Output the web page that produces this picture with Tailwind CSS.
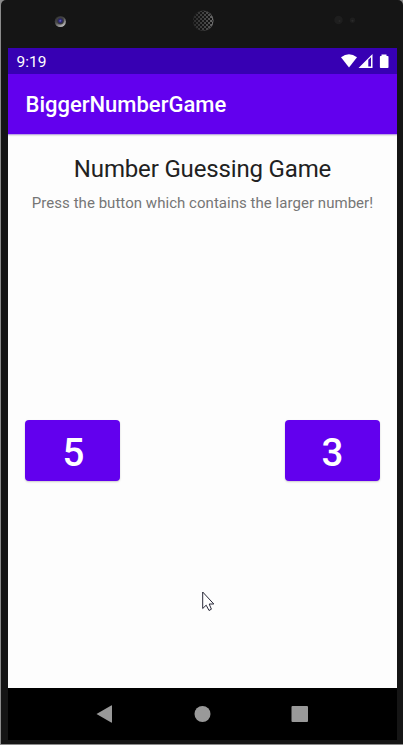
<!DOCTYPE html>
<html lang="en">
<head>
<meta charset="utf-8">
<title>BiggerNumberGame</title>
<script src="https://cdn.jsdelivr.net/npm/@tailwindcss/browser@4"></script>
</head>
<body class="h-[745px] w-[403px] overflow-hidden bg-[#8b8b8b] font-['Roboto',sans-serif]">
<div class="ml-px flex h-[744px] w-[402px] flex-col rounded-t-[5px] bg-[#151515] pl-[7px] pr-[6px]">
  <div class="h-12 shrink-0">
    <svg class="-ml-2 block" width="403" height="48" viewBox="0 0 403 48">
      <defs>
        <radialGradient id="lens"><stop offset="0" stop-color="#7470c0"/><stop offset=".4" stop-color="#29247a"/><stop offset=".75" stop-color="#35353f"/><stop offset="1" stop-color="#444"/></radialGradient>
        <linearGradient id="rim" x2=".6" y2="1"><stop offset="0" stop-color="#222"/><stop offset=".5" stop-color="#4a4a4a"/><stop offset="1" stop-color="#bbb"/></linearGradient>
        <linearGradient id="speaker"><stop offset="0" stop-color="#2a2a2a"/><stop offset=".8" stop-color="#505050"/><stop offset="1" stop-color="#777"/></linearGradient>
        <pattern id="holes" width="4" height="4" patternUnits="userSpaceOnUse"><rect width="2" height="2" fill="#151515"/><rect x="2" y="2" width="2" height="2" fill="#151515"/></pattern>
      </defs>
      <circle cx="60.3" cy="21.5" r="5.6" fill="url(#rim)"/>
      <circle cx="60.3" cy="20.8" r="3.7" fill="url(#lens)"/>
      <circle cx="203.2" cy="20.7" r="10.3" fill="url(#speaker)"/>
      <circle cx="202.8" cy="20.7" r="9.9" fill="url(#holes)"/>
      <circle cx="338.5" cy="20" r="4.3" fill="#1e1e1e"/><circle cx="339.5" cy="21" r="1" fill="#292929"/>
      <circle cx="352.5" cy="20.3" r="2.7" fill="#1e1e1e"/><circle cx="352.5" cy="20.8" r="1" fill="#2b2b2b"/>
    </svg>
  </div>
  <main class="flex h-[640px] w-[389px] shrink-0 flex-col overflow-hidden bg-[#fdfdfd]">
    <div class="relative z-20 flex h-[26px] shrink-0 items-center justify-between bg-[#3700b3] pl-[8.5px] pr-[8px] text-white">
      <span class="pt-[2px] text-[15.5px] leading-6">9:19</span>
      <svg width="48" height="16" viewBox="0 0 48 16" fill="white">
        <path d="M0 4.2Q8 -1.8 16 4.2L8 14.5Z"/>
        <path fill-rule="evenodd" d="M17.5 15L31.5 1V15ZM27.3 6.8V13.5H30V4.2Z"/>
        <path d="M40.5 1.5h5V3h1.2q.8 0 .8.8v10.4q0 .8-.8.8h-7q-.8 0-.8-.8V3.8q0-.8.8-.8h.8Z"/>
      </svg>
    </div>
    <header class="z-10 flex h-[60px] shrink-0 items-center bg-[#6200ee] pl-[17.5px] pt-[2px] shadow-[0_1px_0_#bda5e5,0_2px_1px_#e6e6e6]">
      <h1 class="text-[22px] leading-7 font-medium whitespace-nowrap text-white">BiggerNumberGame</h1>
    </header>
    <section class="flex flex-1 flex-col items-center pt-[19px]">
      <h2 class="text-[24px] leading-8 tracking-[-0.16px] whitespace-nowrap text-[#212121]">Number Guessing Game</h2>
      <p class="mt-[6px] text-[15px] leading-6 tracking-[0.04px] whitespace-nowrap text-[#767676]">Press the button which contains the larger number!</p>
      <div class="mt-[205px] flex w-full justify-between px-[17px]">
        <button class="h-[61px] w-[95px] rounded-[4px] bg-[#6200ee] pt-[5px] pl-[2px] text-[38.5px] leading-[56px] font-medium text-white shadow-[0_1px_2px_#0003]">5</button>
        <button class="h-[61px] w-[95px] rounded-[4px] bg-[#6200ee] pt-[5px] text-[38.5px] leading-[56px] font-medium text-white shadow-[0_1px_2px_#0003]">3</button>
      </div>
    </section>
  </main>
  <nav class="flex h-[52px] w-[389px] shrink-0 items-center bg-black">
    <svg width="389" height="52" viewBox="0 0 389 52" fill="#999">
      <path d="M88.5 26L103.2 17.5Q104 17 104 18V34Q104 35 103.2 34.5Z"/>
      <circle cx="194.5" cy="26" r="8"/>
      <rect x="283.5" y="18" width="16.5" height="16" rx="1"/>
    </svg>
  </nav>
</div>
<svg class="absolute top-[591px] left-[202px]" width="14" height="22" viewBox="0 0 14 22">
  <path d="M.7 1V17.5L4.2 14.2L7 19.5L9.4 18.2L7.2 13H11.8Z" fill="white" stroke="#292938" stroke-width="1"/>
</svg>
</body>
</html>
